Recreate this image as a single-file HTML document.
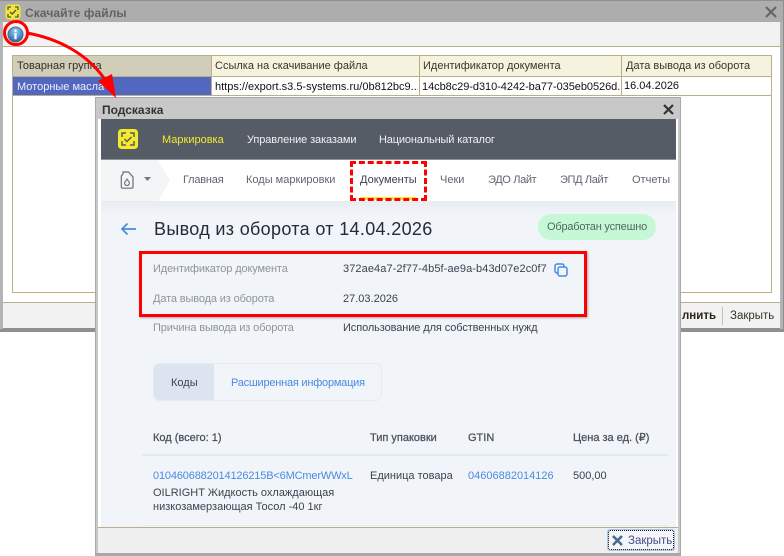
<!DOCTYPE html>
<html lang="ru"><head><meta charset="utf-8"><style>
html,body{margin:0;padding:0;background:#fff}
#r{position:relative;width:784px;height:556px;overflow:hidden;background:#fff;font-family:"Liberation Sans",sans-serif}
#r div,#r span.t{position:absolute;white-space:nowrap}
.t{position:absolute;white-space:nowrap;line-height:14px}
.g,.d,.n,.b,.w{filter:blur(.3px)}
.g{color:#8e939e;font-size:11px;letter-spacing:-.13px}.d{color:#3c4250;font-size:11px}.n{color:#5f6570;font-size:11px}.b{color:#4a8ae0;font-size:11px}
.lg{color:#1f1f1f;font-size:11px;line-height:14px}
.h{color:#4a4f5c;font-size:11px;-webkit-text-stroke:.25px #4a4f5c}
</style></head><body><div id="r">
<!-- outer window -->
<div style="left:0;top:0;width:784px;height:332px;background:#8f8f8f"></div>
<div style="left:0;top:1px;width:783px;height:21px;background:#adadad"></div>
<div style="left:3px;top:22px;width:777px;height:306px;background:#fff"></div>
<div style="left:3px;top:22px;width:777px;height:24px;background:#f2f2f2"></div>
<div style="left:3px;top:46px;width:777px;height:1px;background:#b9ad8c"></div>
<div style="left:0;top:22px;width:3px;height:307px;background:#b4b4b4"></div>
<div style="left:780px;top:22px;width:3px;height:307px;background:#b4b4b4"></div>
<svg style="position:absolute;left:5px;top:4px" width="16" height="16" viewBox="0 0 16 16"><rect width="15" height="15" x=".5" y=".5" rx="3" fill="#f0e635"/><path d="M3 6V3h3M10 3h3v3M13 10v3h-3M6 13H3v-3" fill="none" stroke="#555" stroke-width="1.300"/><path d="M5 8l2.200 2L11 6" fill="none" stroke="#555" stroke-width="1.400"/></svg>
<span class="t" style="left:25px;top:6px;font-size:12px;font-weight:bold;color:#636363;letter-spacing:.1px">Скачайте файлы</span>
<svg style="position:absolute;left:765px;top:6px" width="12" height="12"><path d="M1 1l10 10M11 1L1 11" stroke="#666" stroke-width="2.200"/></svg>
<!-- table -->
<div style="left:12px;top:55px;width:760px;height:238px;border:1px solid #b9ad8c;box-sizing:border-box;background:#fff"></div>
<div style="left:13px;top:56px;width:198px;height:20px;background:#d0cdb8"></div>
<div style="left:212px;top:56px;width:559px;height:20px;background:#f5f2de"></div>
<div style="left:13px;top:76px;width:758px;height:1px;background:#b9ad8c"></div>
<div style="left:13px;top:77px;width:198px;height:18px;background:#5268bf"></div>
<div style="left:13px;top:95px;width:758px;height:1px;background:#b9ad8c"></div>
<div style="left:211px;top:56px;width:1px;height:39px;background:#b9ad8c"></div>
<div style="left:419px;top:56px;width:1px;height:39px;background:#b9ad8c"></div>
<div style="left:621px;top:56px;width:1px;height:39px;background:#b9ad8c"></div>
<span class="t lg" style="left:17px;top:59px;color:#3a2a2a">Товарная группа</span>
<span class="t lg" style="left:215px;top:59px;color:#3a3428">Ссылка на скачивание файла</span>
<span class="t lg" style="left:423px;top:59px;color:#3a3428">Идентификатор документа</span>
<span class="t lg" style="left:626px;top:59px;color:#3a3428">Дата вывода из оборота</span>
<span class="t lg" style="left:17px;top:80px;color:#eef">Моторные масла</span>
<span class="t lg" style="left:215px;top:80px;width:203px;overflow:hidden;color:#111">https://export.s3.5-systems.ru/0b812bc9...</span>
<span class="t lg" style="left:422px;top:80px;width:198px;overflow:hidden;color:#111;letter-spacing:-.05px">14cb8c29-d310-4242-ba77-035eb0526d...</span>
<span class="t lg" style="left:624px;top:79px;color:#111">16.04.2026</span>
<!-- outer footer -->
<div style="left:3px;top:302px;width:777px;height:1px;background:#b9ad8c"></div>
<div style="left:3px;top:303px;width:777px;height:25px;background:#f2f2f2"></div>
<div style="left:722px;top:307px;width:1px;height:18px;background:#c9c0a5"></div>
<span class="t lg" style="left:682px;top:309px;font-weight:bold;font-size:11.500px;color:#2a2418">лнить</span>
<span class="t lg" style="left:730px;top:309px;font-size:11.500px;color:#3a3428">Закрыть</span>
<!-- info icon -->
<svg style="position:absolute;left:7px;top:26px" width="17" height="17" viewBox="0 0 18 18"><defs><radialGradient id="ig" cx=".5" cy=".3" r=".8"><stop offset="0" stop-color="#9fcdf0"/><stop offset=".6" stop-color="#3f86c6"/><stop offset="1" stop-color="#27465f"/></radialGradient></defs><circle cx="9" cy="9" r="8" fill="url(#ig)" stroke="#5a6670"/><circle cx="9" cy="5" r="1.300" fill="#fff"/><rect x="7.800" y="7.500" width="2.400" height="6.500" fill="#fff"/></svg>
<!-- popup -->
<div style="left:95px;top:97px;width:586px;height:459px;background:#a8a8a8"></div>
<div style="left:96px;top:98px;width:584px;height:21px;background:#c8c8c8"></div>
<div style="left:96px;top:119px;width:2px;height:434px;background:#c8c8c8"></div>
<div style="left:678px;top:119px;width:2px;height:434px;background:#c8c8c8"></div>
<div style="left:98px;top:119px;width:580px;height:434px;background:#fff"></div>
<span class="t" style="left:102px;top:103px;font-size:12px;font-weight:bold;color:#333">Подсказка</span>
<svg style="position:absolute;left:663px;top:104px" width="11" height="11"><path d="M1 1l9 9M10 1l-9 9" stroke="#333" stroke-width="2.200"/></svg>
<!-- content -->
<div style="left:101px;top:119px;width:575px;height:408px;background:#f1f5f9;overflow:hidden" id="c"></div>
<div style="left:101px;top:119px;width:575px;height:40px;background:#555c66"></div>
<div style="left:101px;top:159px;width:575px;height:1px;background:#8d939b"></div>
<div style="left:101px;top:160px;width:575px;height:41px;background:#fff"></div>
<div style="left:101px;top:201px;width:575px;height:14px;background:linear-gradient(#e8ecf0,#f1f5f9)"></div>
<div style="left:101px;top:160px;width:69px;height:41px;background:#f3f5f7;clip-path:polygon(0 0,57px 0,69px 50%,57px 100%,0 100%)"></div>
<svg style="position:absolute;left:118px;top:129px" width="20" height="20" viewBox="0 0 20 20"><rect width="20" height="20" rx="3.500" fill="#f2ea2b"/><path d="M4 8V4h4M12 4h4v4M16 12v4h-4M8 16H4v-4" fill="none" stroke="#555c66" stroke-width="1.500"/><path d="M6.500 10l2.500 2.500 4.500-4.500" fill="none" stroke="#555c66" stroke-width="1.500"/></svg>
<span class="t w" style="left:162px;top:133px;font-size:11px;color:#f2ea2b">Маркировка</span>
<span class="t w" style="left:247px;top:133px;font-size:11px;color:#f0f1f3;letter-spacing:-.1px">Управление заказами</span>
<span class="t w" style="left:379px;top:133px;font-size:11px;color:#f0f1f3;letter-spacing:-.15px">Национальный каталог</span>
<svg style="position:absolute;left:120px;top:171px" width="15" height="18" viewBox="0 0 15 18"><path d="M3 3V1h5.500L13 6v10a1.200 1.200 0 0 1-1.200 1.200H2.500A1.200 1.200 0 0 1 1.300 16V5z" fill="none" stroke="#6f6f6f" stroke-width="1.200"/><path d="M7 8l2.300 3.500a2.400 2.400 0 1 1-4.600 0z" fill="none" stroke="#6f6f6f" stroke-width="1.100"/></svg>
<svg style="position:absolute;left:144px;top:177px" width="7" height="5"><path d="M0 0h7L3.500 4z" fill="#777"/></svg>
<span class="t n" style="left:183px;top:173px;letter-spacing:-.2px">Главная</span>
<span class="t n" style="left:246px;top:173px">Коды маркировки</span>
<span class="t d" style="left:360px;top:173px">Документы</span>
<div style="left:360px;top:197px;width:56px;height:3px;background:#f2ea2b"></div>
<span class="t n" style="left:440px;top:173px">Чеки</span>
<span class="t n" style="left:488px;top:173px;letter-spacing:-.35px">ЭДО Лайт</span>
<span class="t n" style="left:560px;top:173px;letter-spacing:-.35px">ЭПД Лайт</span>
<span class="t n" style="left:632px;top:173px">Отчеты</span>
<svg style="position:absolute;left:120px;top:222px" width="17" height="14"><path d="M16 7H2M7.500 1.500L2 7l5.500 5.500" fill="none" stroke="#4a8ae0" stroke-width="1.700"/></svg>
<span class="t w" style="left:154px;top:219px;font-size:18px;line-height:20px;color:#252b3a;letter-spacing:.33px">Вывод из оборота от 14.04.2026</span>
<div style="left:538px;top:214px;width:118px;height:26px;border-radius:13px;background:#c6f8d8"></div>
<span class="t w" style="left:547px;top:220px;font-size:11px;color:#4e6a5e;letter-spacing:-.2px">Обработан успешно</span>
<span class="t g" style="left:153px;top:262px">Идентификатор документа</span>
<span class="t d" style="left:343px;top:262px;letter-spacing:.09px">372ae4a7-2f77-4b5f-ae9a-b43d07e2c0f7</span>
<svg style="position:absolute;left:554px;top:263px" width="14" height="14"><rect x="1" y="1" width="9" height="9" rx="2" fill="none" stroke="#4a8ae0" stroke-width="1.500"/><rect x="4" y="4" width="9" height="9" rx="2" fill="#f1f5f9" stroke="#4a8ae0" stroke-width="1.500"/></svg>
<span class="t g" style="left:153px;top:292px">Дата вывода из оборота</span>
<span class="t d" style="left:343px;top:292px">27.03.2026</span>
<span class="t g" style="left:153px;top:321px">Причина вывода из оборота</span>
<span class="t d" style="left:343px;top:321px;letter-spacing:-.1px">Использование для собственных нужд</span>
<div style="left:153px;top:363px;width:229px;height:38px;border:1px solid #e6ebf1;border-radius:6px;box-sizing:border-box;overflow:hidden"></div>
<div style="left:154px;top:364px;width:60px;height:36px;background:#dce5ef;border-radius:5px 0 0 5px"></div>
<span class="t d" style="left:171px;top:376px">Коды</span>
<span class="t b" style="left:231px;top:376px;letter-spacing:-.22px">Расширенная информация</span>
<span class="t h w" style="left:153px;top:431px">Код (всего: 1)</span>
<span class="t h w" style="left:370px;top:431px">Тип упаковки</span>
<span class="t h w" style="left:468px;top:431px">GTIN</span>
<span class="t h w" style="left:573px;top:431px">Цена за ед. (₽)</span>
<div style="left:142px;top:454px;width:526px;height:2px;background:#e1e9f3"></div>
<span class="t b" style="left:153px;top:469px;letter-spacing:-.16px">0104606882014126215B&lt;6MCmerWWxL</span>
<span class="t d" style="left:370px;top:469px">Единица товара</span>
<span class="t b" style="left:468px;top:469px">04606882014126</span>
<span class="t d" style="left:573px;top:469px">500,00</span>
<span class="t d" style="left:153px;top:486px">OILRIGHT Жидкость охлаждающая</span>
<span class="t d" style="left:153px;top:500px">низкозамерзающая Тосол -40 1кг</span>
<div style="left:142px;top:525px;width:526px;height:1px;background:#e1e9f3"></div>
<!-- popup footer -->
<div style="left:98px;top:527px;width:580px;height:1px;background:#b9ad8c"></div>
<div style="left:98px;top:528px;width:580px;height:25px;background:#f0f0f0"></div>
<div style="left:608px;top:530px;width:66px;height:20px;box-sizing:border-box;border:1px dotted #111;outline:1px solid #a9c4ec;border-radius:2px;background:#f3f6fb"></div>
<svg style="position:absolute;left:612px;top:535px" width="11" height="11"><path d="M1 1l9 9M10 1l-9 9" stroke="#4d6a8c" stroke-width="2.600"/></svg>
<span class="t" style="left:628px;top:534px;font-size:11.500px;color:#4b4a86">Закрыть</span>
<!-- annotations -->
<div style="left:350px;top:161px;width:77px;height:40px;box-sizing:border-box;border:3px dashed #f00"></div>
<div style="left:139px;top:251px;width:448px;height:66px;box-sizing:border-box;border:3px solid #f00;box-shadow:1px 1px 2px rgba(0,0,0,.3)"></div>
<svg style="position:absolute;left:0;top:0" width="130" height="105">
<circle cx="16" cy="33" r="11.500" fill="none" stroke="#f00" stroke-width="3"/>
<path d="M27 33C55 38 88 52 108 84" fill="none" stroke="#f00" stroke-width="3"/>
<path d="M116 98L98 81L112 74z" fill="#f00"/>
</svg>
</div></body></html>
